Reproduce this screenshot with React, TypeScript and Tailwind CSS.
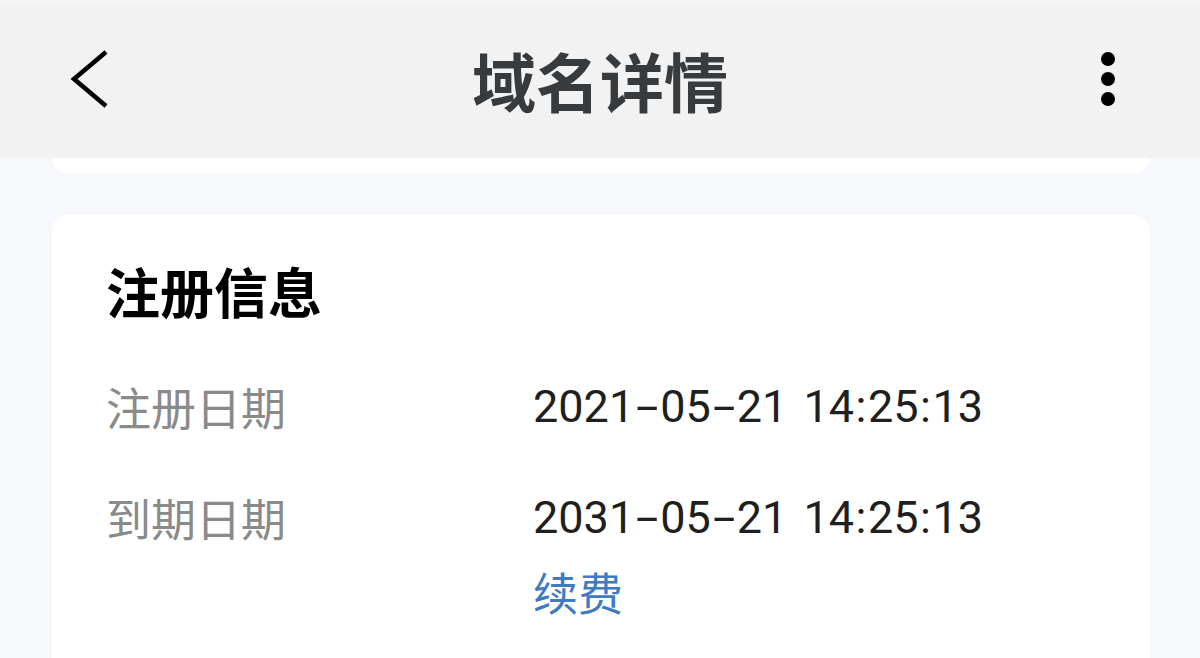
import React from "react";

const font = { fontFamily: '"Noto Sans CJK SC", "Noto Sans", sans-serif' };

function DateValue({ text }: { text: string }) {
  return (
    <div
      className="text-[45px] leading-none text-[#1f1f1f] whitespace-nowrap"
      style={{ fontFamily: 'Roboto, "Noto Sans CJK SC", sans-serif' }}
    >
      {text.split("").map((c, i) => {
        if (c === "-")
          return (
            <span key={i} className="inline-block w-[26px] text-center">
              <span className="inline-block scale-x-[1.8]">-</span>
            </span>
          );
        if (c === ":")
          return (
            <span key={i} className="inline-block w-[14px] text-center">
              :
            </span>
          );
        if (c === " ")
          return (
            <span key={i} className="inline-block w-[16px]">
              {" "}
            </span>
          );
        return <span key={i}>{c}</span>;
      })}
    </div>
  );
}

export default function App() {
  return (
    <div
      className="w-[1200px] h-[658px] overflow-hidden bg-[#f7f8fc] flex flex-col"
      style={font}
    >
      <div className="h-[3px] bg-[#f6f6f8]" />
      <div className="h-[155px] bg-[#f2f2f2] flex items-center justify-between relative shrink-0">
        <div className="w-[180px] h-full flex items-center pl-[70px] -mt-[2px]">
          <svg width="40" height="62" viewBox="0 0 40 62">
            <path d="M36 3 L4 30 L36 57" fill="none" stroke="#000" strokeWidth="4.5" />
          </svg>
        </div>
        <div className="text-[64px] leading-none font-bold text-[#383b3e] -mt-[4px]">
          域名详情
        </div>
        <div className="w-[180px] h-full flex items-center justify-end pr-[85px] -mt-[4px]">
          <div className="flex flex-col gap-[6px]">
            <div className="w-[14px] h-[14px] rounded-full bg-black" />
            <div className="w-[14px] h-[14px] rounded-full bg-black" />
            <div className="w-[14px] h-[14px] rounded-full bg-black" />
          </div>
        </div>
      </div>
      <div className="ml-[52px] w-[1098px] h-[15px] bg-white rounded-b-[16px] shrink-0" />
      <div className="ml-[52px] w-[1098px] mt-[42px] bg-white rounded-t-[16px] flex-1 pl-[54px] pt-[49px]">
        <div className="text-[54px] leading-none font-bold text-black">注册信息</div>
        <div className="mt-[66px] grid grid-cols-[427px_1fr] gap-y-[66px]">
          <div className="text-[45px] leading-none text-[#8a8a8a]">注册日期</div>
          <DateValue text="2021-05-21 14:25:13" />
          <div className="text-[45px] leading-none text-[#8a8a8a]">到期日期</div>
          <div className="flex flex-col">
            <DateValue text="2031-05-21 14:25:13" />
            <div className="mt-[29px] text-[45px] leading-none text-[#3f7bc1]">续费</div>
          </div>
        </div>
      </div>
    </div>
  );
}
